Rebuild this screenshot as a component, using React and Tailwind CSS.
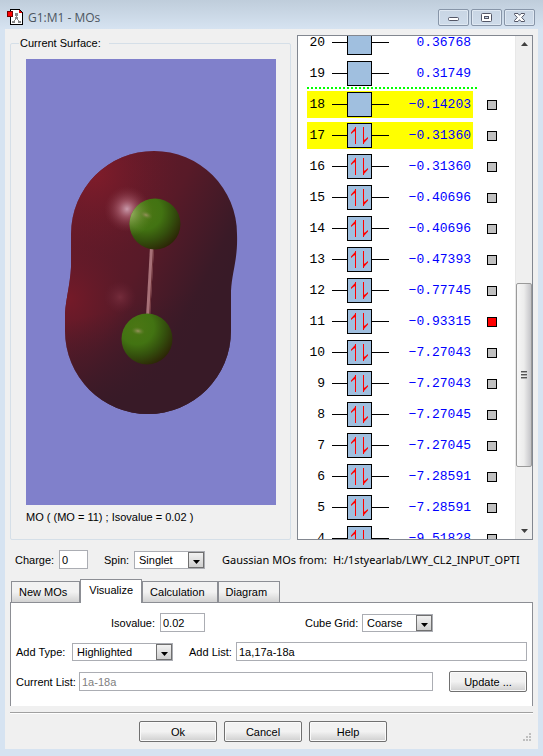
import { useState } from "react";

const ORBITALS = [
  { id: 20, energy: "0.36768" },
  { id: 19, energy: "0.31749", gapBelow: true },
  { id: 18, energy: "−0.14203", highlighted: true, surface: true },
  { id: 17, energy: "−0.31360", highlighted: true, occupied: true, surface: true },
  { id: 16, energy: "−0.31360", occupied: true, surface: true },
  { id: 15, energy: "−0.40696", occupied: true, surface: true },
  { id: 14, energy: "−0.40696", occupied: true, surface: true },
  { id: 13, energy: "−0.47393", occupied: true, surface: true },
  { id: 12, energy: "−0.77745", occupied: true, surface: true },
  { id: 11, energy: "−0.93315", occupied: true, surface: true },
  { id: 10, energy: "−7.27043", occupied: true, surface: true },
  { id: 9, energy: "−7.27043", occupied: true, surface: true },
  { id: 8, energy: "−7.27045", occupied: true, surface: true },
  { id: 7, energy: "−7.27045", occupied: true, surface: true },
  { id: 6, energy: "−7.28591", occupied: true, surface: true },
  { id: 5, energy: "−7.28591", occupied: true, surface: true },
  { id: 4, energy: "−9.51828", occupied: true, surface: true },
];

const TABS = ["New MOs", "Visualize", "Calculation", "Diagram"];

function AppIcon() {
  return (
    <svg width="17" height="17" viewBox="0 0 17 17" shapeRendering="crispEdges" aria-hidden="true">
      <path d="M3.5.5h9l3 3v12h-12z" fill="#fff" stroke="#000" />
      <path d="M12 1h1v1h1v1h1v1h-3z" fill="#e00000" />
      <path d="M9.5 5v5M9.5 9l-3 4M9.5 9l3 4" stroke="#888" fill="none" />
      <path d="M8 4h3v3H8zM8 8h3v2H8zM5 12h3v2H5zM11 12h3v2h-3z" fill="#888" />
      <path d="M.5 2.5h5v5h-5z" fill="#f00" stroke="#700" />
    </svg>
  );
}

function CaptionButton({ label, children }) {
  return (
    <button
      type="button"
      aria-label={label}
      className="flex h-[17px] w-[31px] items-center justify-center rounded-xs border border-[#8795a8] bg-linear-to-b from-[#c8d5e4] to-[#cfdcea] shadow-[inset_0_0_0_1px_#dfe8f2]"
    >
      <svg width="13" height="11" viewBox="0 0 13 11" aria-hidden="true">
        {children}
      </svg>
    </button>
  );
}

function TitleBar() {
  return (
    <header className="flex h-[29px] items-center bg-linear-to-b from-[#bfcddb] to-[#d6e3f1] pt-[6px] pr-2 pl-[7px]">
      <AppIcon />
      <h1 className="ml-1 flex-1 font-['Open_Sans',sans-serif] text-[12px] leading-4 text-[#4c5560]">
        G1:M1 - MOs
      </h1>
      <div className="flex gap-[2px]">
        <CaptionButton label="Minimize">
          <rect x="1.5" y="5.5" width="10" height="3" rx="1" fill="#fff" stroke="#535666" />
        </CaptionButton>
        <CaptionButton label="Maximize">
          <rect x="1.5" y="1.5" width="10" height="8" rx="1" fill="#fff" stroke="#535666" />
          <rect x="4.5" y="4.5" width="4" height="2" fill="#c8d5e4" stroke="#535666" />
        </CaptionButton>
        <CaptionButton label="Close">
          <path
            d="M1.5 1.500h3.500l1.500 1.800 1.500-1.800h3.500v1L8.700 5.500l2.800 3v1H8L6.500 7.700 5 9.500H1.500v-1l2.800-3-2.800-3z"
            fill="#fff"
            stroke="#535666"
          />
        </CaptionButton>
      </div>
    </header>
  );
}

function SurfaceView() {
  return (
    <svg
      viewBox="0 0 250 446"
      preserveAspectRatio="xMidYMid slice"
      className="block h-[446px] w-full bg-[#8080cb]"
      role="img"
      aria-label="Molecular orbital surface"
    >
      <defs>
        <linearGradient id="base" gradientUnits="userSpaceOnUse" x1="50" y1="150" x2="195" y2="225">
          <stop offset="0" stopColor="#661a29" />
          <stop offset="0.5" stopColor="#581a28" />
          <stop offset="0.9" stopColor="#3a1a27" />
          <stop offset="1" stopColor="#381a27" />
        </linearGradient>
        <radialGradient id="upper" gradientUnits="userSpaceOnUse" cx="68" cy="114" r="85">
          <stop offset="0" stopColor="#801c2a" />
          <stop offset="1" stopColor="#661a29" stopOpacity="0" />
        </radialGradient>
        <radialGradient id="lower" gradientUnits="userSpaceOnUse" cx="42" cy="240" r="60">
          <stop offset="0" stopColor="#751a28" />
          <stop offset="1" stopColor="#641a29" stopOpacity="0" />
        </radialGradient>
        <linearGradient id="shade" gradientUnits="userSpaceOnUse" x1="90" y1="250" x2="112" y2="335">
          <stop offset="0" stopColor="#381a27" stopOpacity="0" />
          <stop offset="1" stopColor="#381a27" />
        </linearGradient>
        <radialGradient id="glare">
          <stop offset="0" stopColor="#c99aaa" />
          <stop offset="0.35" stopColor="#a65c6c" stopOpacity="0.8" />
          <stop offset="1" stopColor="#7a2a38" stopOpacity="0" />
        </radialGradient>
        <radialGradient id="glareSoft">
          <stop offset="0" stopColor="#742c3b" />
          <stop offset="1" stopColor="#642030" stopOpacity="0" />
        </radialGradient>
        <radialGradient id="atom" cx="0.3" cy="0.27" r="0.8">
          <stop offset="0" stopColor="#4b7614" />
          <stop offset="0.42" stopColor="#427312" />
          <stop offset="0.7" stopColor="#34500d" />
          <stop offset="1" stopColor="#2c2506" />
        </radialGradient>
        <radialGradient id="spot">
          <stop offset="0" stopColor="#97915d" />
          <stop offset="1" stopColor="#5c7d28" stopOpacity="0" />
        </radialGradient>
        <radialGradient id="rim" gradientUnits="userSpaceOnUse" cx="103" cy="154" r="24">
          <stop offset="0" stopColor="#a1b56b" />
          <stop offset="1" stopColor="#5c8424" stopOpacity="0" />
        </radialGradient>
        <path
          id="lobe"
          d="M45 175A83 83 0 0 1 211 175C212 200 206 213 205 232V272A83 83 0 0 1 39 272V254C40 240 44 226 45 208Z"
        />
      </defs>
      <use href="#lobe" fill="url(#base)" />
      <use href="#lobe" fill="url(#upper)" />
      <use href="#lobe" fill="url(#lower)" />
      <use href="#lobe" fill="url(#shade)" />
      <circle cx="101" cy="150" r="23" fill="url(#glare)" />
      <circle cx="94" cy="238" r="16" fill="url(#glareSoft)" />
      <path d="M126 188L122 258" stroke="#a87178" strokeWidth="4" />
      <path d="M127.500 188L123.500 258" stroke="#6b3138" strokeWidth="1" />
      <circle cx="129" cy="165" r="25.500" fill="url(#atom)" />
      <circle cx="129" cy="165" r="25.500" fill="url(#rim)" />
      <ellipse cx="120" cy="156" rx="7" ry="4" fill="url(#spot)" transform="rotate(20 120 156)" />
      <circle cx="121" cy="280" r="25.500" fill="url(#atom)" />
      <ellipse cx="112" cy="272" rx="7" ry="4" fill="url(#spot)" transform="rotate(10 112 272)" />
    </svg>
  );
}

function OrbitalRow({ orbital, active, onSelect }) {
  return (
    <li>
      <div className="flex h-[27px] items-center">
        <div
          className={`flex h-full w-[166px] items-center pr-[2px] pl-[2px] ${
            orbital.highlighted ? "bg-[#ffff00]" : ""
          }`}
        >
          <span className="w-4 text-right text-black">{orbital.id}</span>
          <span className="ml-[7px] h-px w-[15px] bg-black" />
          <span className="flex size-[25px] items-center justify-center border border-black bg-[#a0bfdf]">
            {orbital.occupied && (
              <svg width="17" height="19" viewBox="0 0 17 19" aria-hidden="true">
                <path d="M4 1h1v17H4zM12 1h1v17h-1z" fill="#f00" />
                <path d="M5 1v4L3 5.500 0 8V6.500zM12 18v-4l2-.5 3-2.500v1.500z" fill="#f00" />
              </svg>
            )}
          </span>
          <span className="h-px w-[17px] bg-black" />
          <span className="flex-1 text-right text-[#0000ff]">{orbital.energy}</span>
        </div>
        {orbital.surface && (
          <input
            type="checkbox"
            checked={active}
            onChange={() => onSelect(orbital.id)}
            aria-label={`Show surface for MO ${orbital.id}`}
            className="ml-[14px] size-[10px] appearance-none border border-black bg-[#c0c0c0] checked:bg-[#ff0000]"
          />
        )}
      </div>
      <div className="h-1">
        {orbital.gapBelow && (
          <div className="h-[2px] w-[170px] bg-[repeating-linear-gradient(90deg,#00ff00_0_2px,transparent_2px_4px)]" />
        )}
      </div>
    </li>
  );
}

function ScrollBar() {
  return (
    <div className="flex w-[17px] flex-col border-l border-[#e8e8e8] bg-[#efefef]" aria-hidden="true">
      <div className="flex h-4 items-center justify-center">
        <svg width="7" height="4" viewBox="0 0 7 4">
          <path d="M3.500 0L7 4H0z" fill="#404040" />
        </svg>
      </div>
      <div className="grow-[231]" />
      <div className="flex h-[184px] flex-col items-center justify-center gap-px rounded-xs border border-[#9a9a9a] bg-linear-to-r from-[#f6f6f6] via-[#ececec] to-[#c4c4c8]">
        <span className="h-[2px] w-[6px] border-t border-[#555] bg-[#aaa]" />
        <span className="h-[2px] w-[6px] border-t border-[#555] bg-[#aaa]" />
        <span className="h-[2px] w-[6px] border-t border-[#555] bg-[#aaa]" />
      </div>
      <div className="grow-[56]" />
      <div className="flex h-4 items-center justify-center">
        <svg width="7" height="4" viewBox="0 0 7 4">
          <path d="M0 0h7L3.500 4z" fill="#404040" />
        </svg>
      </div>
    </div>
  );
}

function TextField({ id, className, ...props }) {
  return (
    <input
      id={id}
      type="text"
      className={`h-[19px] min-w-0 border border-[#abadb3] bg-white px-[2px] outline-none ${className}`}
      {...props}
    />
  );
}

function SelectField({ id, options, className }) {
  return (
    <div className={`relative h-[18px] shrink-0 ${className}`}>
      <select
        id={id}
        className="block h-full w-full appearance-none border border-[#abadb3] bg-white pr-4 pl-1 leading-4 outline-none"
      >
        {options.map((option) => (
          <option key={option}>{option}</option>
        ))}
      </select>
      <span className="pointer-events-none absolute inset-y-px right-px flex w-4 items-center justify-center border border-[#707070] bg-linear-to-b from-[#f2f2f2] to-[#cfcfcf] pt-1">
        <svg width="7" height="4" viewBox="0 0 7 4" aria-hidden="true">
          <path d="M0 0h7L3.500 4z" />
        </svg>
      </span>
    </div>
  );
}

function PushButton({ children }) {
  return (
    <button
      type="button"
      className="h-[21px] w-[78px] shrink-0 rounded-xs border border-[#707070] bg-linear-to-b from-[#f2f2f2] from-50% to-[#cfcfcf] leading-4 shadow-[inset_0_0_0_1px_#fafafa]"
    >
      {children}
    </button>
  );
}

export default function App() {
  const [activeOrbital, setActiveOrbital] = useState(11);
  const [activeTab, setActiveTab] = useState("Visualize");

  return (
    <div className="min-h-screen bg-[#d6e3f1] pb-[7px] font-['Liberation_Sans',Arial,sans-serif] text-[11px] leading-4 text-black">
      <TitleBar />

      <main className="mx-[5px] bg-[#f0f0f0] px-[5px] pt-[6px] pb-[7px]">
        <div className="flex gap-[6px]">
          <fieldset className="min-w-0 flex-1 rounded-xs border border-[#d5dfe8] pr-[14px] pl-[15px]">
            <legend className="-ml-[7px] pr-2 pl-px">Current Surface:</legend>
            <div className="pt-2">
              <SurfaceView />
              <p className="mt-1">MO ( (MO = 11) ; Isovalue = 0.02 )</p>
            </div>
          </fieldset>

          <section
            aria-label="Orbitals"
            className="flex h-[505px] w-[236px] overflow-hidden border border-[#828790] bg-white"
          >
            <ol className="-mt-[7px] flex-1 pl-[9px] font-['Liberation_Mono',monospace] text-[13px]">
              {ORBITALS.map((orbital) => (
                <OrbitalRow
                  key={orbital.id}
                  orbital={orbital}
                  active={orbital.id === activeOrbital}
                  onSelect={setActiveOrbital}
                />
              ))}
            </ol>
            <ScrollBar />
          </section>
        </div>

        <div className="mt-[10px] flex items-center pr-[6px] pl-[5px]">
          <label htmlFor="charge" className="w-11">Charge:</label>
          <TextField id="charge" defaultValue="0" className="w-[29px]" />
          <label htmlFor="spin" className="ml-4 w-[30px]">Spin:</label>
          <SelectField id="spin" options={["Singlet", "Triplet"]} className="w-[71px]" />
          <p className="ml-[17px] flex min-w-0 flex-1 gap-[6px] overflow-hidden font-['Noto_Sans','Open_Sans',sans-serif] whitespace-nowrap">
            <span>Gaussian MOs from:</span>
            <span>H:/1styearlab/LWY_CL2_INPUT_OPTI</span>
          </p>
        </div>

        <div role="tablist" className="relative mt-[10px] flex items-end pl-px">
          {TABS.map((tab) => (
            <button
              key={tab}
              type="button"
              role="tab"
              aria-selected={tab === activeTab}
              onClick={() => setActiveTab(tab)}
              className={
                tab === activeTab
                  ? "-mb-px h-6 border border-b-0 border-[#8c8e94] bg-white px-2 pb-1"
                  : "h-[21px] border border-b-0 border-[#8c8e94] bg-linear-to-b from-[#f2f2f2] from-50% to-[#d2d2d2] pr-3 pl-[7px]"
              }
            >
              {tab}
            </button>
          ))}
        </div>

        <section
          role="tabpanel"
          aria-label={activeTab}
          className="flex flex-col gap-[10px] border border-b-0 border-[#8c8e94] bg-white px-[5px] pt-[10px] pb-[14px]"
        >
          <div className="flex items-center pr-[94px] pl-[95px]">
            <label htmlFor="isovalue" className="w-[49px]">Isovalue:</label>
            <TextField id="isovalue" defaultValue="0.02" className="w-[45px]" />
            <label htmlFor="grid" className="ml-auto w-[57px]">Cube Grid:</label>
            <SelectField id="grid" options={["Coarse", "Medium", "Fine"]} className="w-[71px]" />
          </div>
          <div className="flex items-center">
            <label htmlFor="addType" className="w-14">Add Type:</label>
            <SelectField id="addType" options={["Highlighted", "All", "None"]} className="w-[101px]" />
            <label htmlFor="addList" className="ml-4 w-[47px]">Add List:</label>
            <TextField id="addList" defaultValue="1a,17a-18a" className="flex-1" />
          </div>
          <div className="flex items-center">
            <label htmlFor="currentList" className="w-[63px]">Current List:</label>
            <TextField
              id="currentList"
              defaultValue="1a-18a"
              readOnly
              className="mr-4 flex-1 text-[#808080]"
            />
            <PushButton>Update ...</PushButton>
          </div>
        </section>

        <div className="mt-[6px] h-[2px] border-t border-[#a0a0a0] bg-white" />

        <footer className="mt-[7px] flex items-end">
          <div className="flex flex-1 justify-center gap-[7px]">
            <PushButton>Ok</PushButton>
            <PushButton>Cancel</PushButton>
            <PushButton>Help</PushButton>
          </div>
          <svg width="17" height="12" viewBox="0 0 17 12" shapeRendering="crispEdges" aria-hidden="true">
            <path
              d="M13 3h2v2h-2zM10 6h2v2h-2zM13 6h2v2h-2zM7 9h2v2H7zM10 9h2v2h-2zM13 9h2v2h-2z"
              fill="#bfbfbf"
            />
          </svg>
        </footer>
      </main>
    </div>
  );
}
